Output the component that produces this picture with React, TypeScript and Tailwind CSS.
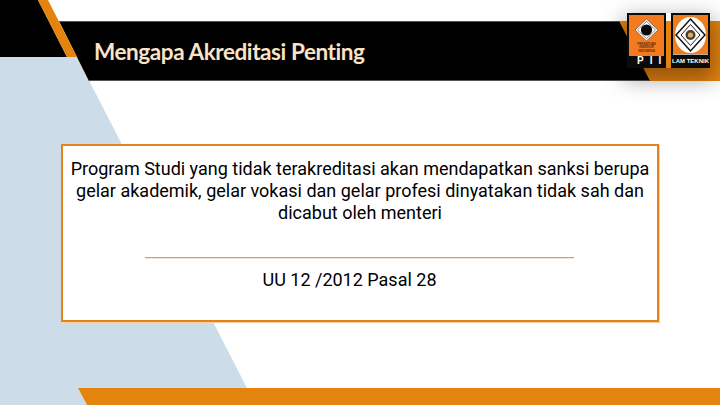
import React from "react";

function PiiLogo() {
  return (
    <div className="flex h-[55px] w-[39px] flex-col bg-[#0b0b0b] p-[2px]">
      <div className="flex h-[41px] flex-col items-center bg-[#f47a20]">
        <svg width="35" height="27" viewBox="0 0 35 27" className="shrink-0">
          <path d="M17.5 4 L29 15 L17.5 26 L6 15 Z" fill="#fff" stroke="#6a5a4a" strokeWidth="0.8" />
          <path d="M17.5 6.5 L26.5 15 L17.5 23.5 L8.5 15 Z" fill="none" stroke="#222" strokeWidth="0.5" />
          <circle cx="17.5" cy="15" r="5.6" fill="#0a0a0a" />
        </svg>
        <div className="font-['Liberation_Sans',sans-serif] mt-[1px] text-center text-[3px] leading-[3.4px] font-bold text-[#5a2a08]">
          PERSATUAN
          <br />
          INSINYUR
          <br />
          INDONESIA
        </div>
      </div>
      <div className="flex flex-1 items-center pl-[8px] font-['Liberation_Sans',sans-serif] text-[10px] leading-none font-bold tracking-[6px] text-white">
        PII
      </div>
    </div>
  );
}

function LamLogo() {
  return (
    <div className="flex h-[55px] w-[39px] flex-col bg-[#0b0b0b] p-[2px]">
      <div className="h-[40px] border-b border-[#b8b0a0] bg-[#ee7d1e]">
        <svg width="35" height="39" viewBox="0 0 35 39">
          <ellipse cx="17.5" cy="20" rx="15.5" ry="18" fill="#fff" />
          <path d="M17.5 4 L32 20 L17.5 36 L3 20 Z" fill="none" stroke="#111" strokeWidth="1.5" />
          <path d="M17.5 9.5 L27 20 L17.5 30.5 L8 20 Z" fill="none" stroke="#222" strokeWidth="1" />
          <circle cx="17.5" cy="20" r="5" fill="#4a4030" />
          <circle cx="17.5" cy="20" r="2.6" fill="#d8b060" />
        </svg>
      </div>
      <div className="flex flex-1 items-center justify-center pt-[1px] font-['Liberation_Sans',sans-serif] text-[6px] leading-none font-bold whitespace-nowrap text-white">
        LAM TEKNIK
      </div>
    </div>
  );
}

export default function App() {
  return (
    <div className="relative h-[405px] w-[720px] overflow-hidden bg-white">
      {/* diagonal backdrop shapes */}
      <svg width="720" height="405" viewBox="0 0 720 405" className="absolute inset-0">
        <polygon points="0,57 77,57 247,388 78,388 87,405 0,405" fill="#ccdde9" />
        <polygon points="78,388 720,388 720,405 87,405" fill="#e5830f" />
      </svg>

      {/* Header band */}
      <header className="relative mt-[21px]">
        <div className="h-[60px] bg-[#e5830f] [clip-path:polygon(59px_0,100%_0,100%_100%,89px_100%)]">
          <div className="flex h-full items-center border-y border-[#555] bg-black pt-[1px] pl-[94px] [clip-path:polygon(0_0,619px_0,650px_100%,0_100%)]">
            <h1 className="font-['Lato',sans-serif] text-[22.5px] font-bold tracking-[-0.42px] text-[#fbe3c6]">Mengapa Akreditasi Penting</h1>
          </div>
        </div>
        <div className="absolute top-[-8px] left-[627px] flex gap-[5px] shadow-[0_8px_20px_4px_rgba(0,0,0,0.35)]">
          <PiiLogo />
          <LamLogo />
        </div>
      </header>

      {/* top-left corner */}
      <svg width="80" height="60" viewBox="0 0 80 60" className="absolute top-0 left-0">
        <polygon points="0,0 38,0 67,57 0,57" fill="#000" />
        <polygon points="38,0 48,0 77,57 67,57" fill="#e5830f" />
      </svg>

      {/* Main card */}
      <main className="relative mx-[61px] mt-[63px] h-[178px] w-[598px] border-2 border-[#e5831a] bg-white pt-[12px] text-center font-['Roboto',sans-serif] text-[18px] leading-[22px] text-black shadow-[1px_1px_0_#f6cfa0]">
        <p>
          Program Studi yang tidak terakreditasi akan mendapatkan sanksi berupa
          <br />
          gelar akademik, gelar vokasi dan gelar profesi dinyatakan tidak sah dan
          <br />
          dicabut oleh menteri
        </p>
        <div className="mt-[33px] ml-[82px] h-[2px] w-[429px] border-t border-[#e8994a] bg-[#fae3cc]" />
        <p className="mt-[10px] pr-[21px]">UU 12 /2012 Pasal 28</p>
      </main>
    </div>
  );
}
